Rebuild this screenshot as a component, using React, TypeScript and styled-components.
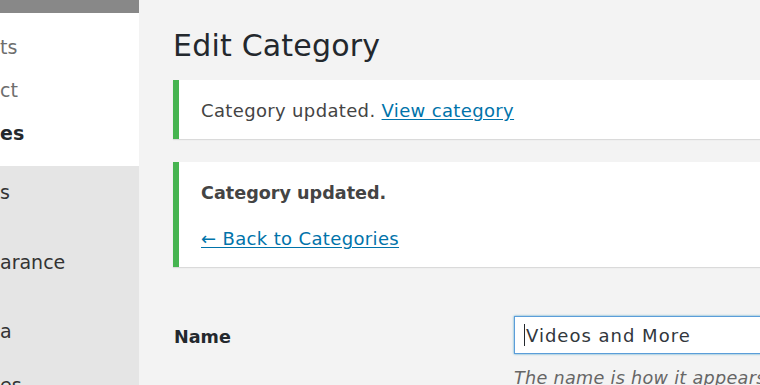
import React from "react";
import styled, { createGlobalStyle } from "styled-components";

const GlobalStyle = createGlobalStyle`
  html, body {
    margin: 0;
    padding: 0;
    background: #f3f3f3;
    font-family: "DejaVu Sans", "Liberation Sans", sans-serif;
    color: #23282d;
  }
  body {
    width: 760px;
    height: 385px;
    overflow: hidden;
  }
`;

const Layout = styled.div`
  display: grid;
  grid-template-columns: 139px 1fr;
  height: 385px;
  overflow: hidden;
`;

const Sidebar = styled.nav`
  display: flex;
  flex-direction: column;
  background: #e5e5e5;
  overflow: hidden;

  & > * {
    flex-shrink: 0;
  }
`;

const TopBar = styled.div`
  height: 13px;
  background: #888888;
`;

const SubMenu = styled.ul`
  list-style: none;
  margin: 0;
  padding: 13px 0 11px;
  background: #ffffff;
`;

const SubItem = styled.li<{ current?: boolean }>`
  height: 43px;
  line-height: 43px;
  font-size: 19px;
  white-space: nowrap;
  color: ${({ current }) => (current ? "#23282d" : "#6e6e6e")};
  font-weight: ${({ current }) => (current ? 700 : 400)};
`;

const MainMenu = styled.ul`
  list-style: none;
  margin: 0;
  padding: 14px 0 0;
`;

const MenuItem = styled.li<{ offset?: number }>`
  margin-top: ${({ offset = 0 }) => offset}px;
  line-height: 24px;
  font-size: 19px;
  white-space: nowrap;
  color: #333333;
`;

const Main = styled.main`
  padding: 26px 0 0 34px;
  min-width: 0;
`;

const Title = styled.h1`
  margin: 0 0 14px;
  font-size: 30px;
  line-height: 40px;
  font-weight: 400;
  letter-spacing: 0.2px;
  color: #23282d;
  white-space: nowrap;
`;

const Notice = styled.div<{ tall?: boolean }>`
  background: #ffffff;
  border-left: 6px solid #46b450;
  box-shadow: 0 1px 1px 0 rgba(0, 0, 0, 0.1);
  padding: ${({ tall }) => (tall ? "19px 0 16px 22px" : "18px 0 16px 22px")};
  margin-bottom: 23px;
`;

const NoticeLine = styled.p<{ bold?: boolean; spaced?: boolean }>`
  margin: ${({ spaced }) => (spaced ? "20px 0 0" : "0")};
  font-size: ${({ bold }) => (bold ? 17.6 : 18)}px;
  letter-spacing: ${({ bold }) => (bold ? 0 : 0.35)}px;
  line-height: 25px;
  font-weight: ${({ bold }) => (bold ? 700 : 400)};
  color: #444444;
  white-space: nowrap;
`;

const Link = styled.a`
  color: #0073aa;
  text-decoration: underline;
  text-underline-offset: 2px;
`;

const FormRow = styled.div`
  display: grid;
  grid-template-columns: 341px 1fr;
  align-items: start;
  margin-top: 49px;
`;

const Label = styled.label`
  padding: 9px 0 0 1px;
  font-size: 17.6px;
  line-height: 25px;
  font-weight: 700;
  color: #23282d;
`;

const Field = styled.div`
  display: flex;
  flex-direction: column;
  gap: 12px;
`;

const Input = styled.div`
  display: flex;
  align-items: center;
  height: 36px;
  padding-left: 9px;
  background: #ffffff;
  border: 1px solid #5b9dd9;
  box-shadow: 0 0 2px rgba(30, 140, 190, 0.8);
  font-size: 18px;
  letter-spacing: 1px;
  color: #32373c;
  white-space: nowrap;
  overflow: hidden;
`;

const Caret = styled.span`
  display: inline-block;
  width: 1px;
  height: 22px;
  margin-right: 1px;
  background: #23282d;
`;

const Description = styled.p`
  margin: 0;
  font-size: 17.6px;
  line-height: 24px;
  letter-spacing: 0.3px;
  font-style: italic;
  color: #666666;
  white-space: nowrap;
`;

export default function App() {
  return (
    <>
      <GlobalStyle />
      <Layout>
        <Sidebar>
          <TopBar />
          <SubMenu>
            <SubItem>ts</SubItem>
            <SubItem>ct</SubItem>
            <SubItem current>es</SubItem>
          </SubMenu>
          <MainMenu>
            <MenuItem>s</MenuItem>
            <MenuItem offset={46}>arance</MenuItem>
            <MenuItem offset={45}>a</MenuItem>
            <MenuItem offset={30}>es</MenuItem>
          </MainMenu>
        </Sidebar>
        <Main>
          <Title>Edit Category</Title>
          <Notice>
            <NoticeLine>
              Category updated. <Link href="#">View category</Link>
            </NoticeLine>
          </Notice>
          <Notice tall>
            <NoticeLine bold>Category updated.</NoticeLine>
            <NoticeLine spaced>
              <Link href="#">← Back to Categories</Link>
            </NoticeLine>
          </Notice>
          <FormRow>
            <Label>Name</Label>
            <Field>
              <Input>
                <Caret />
                Videos and More
              </Input>
              <Description>The name is how it appears on your site.</Description>
            </Field>
          </FormRow>
        </Main>
      </Layout>
    </>
  );
}
